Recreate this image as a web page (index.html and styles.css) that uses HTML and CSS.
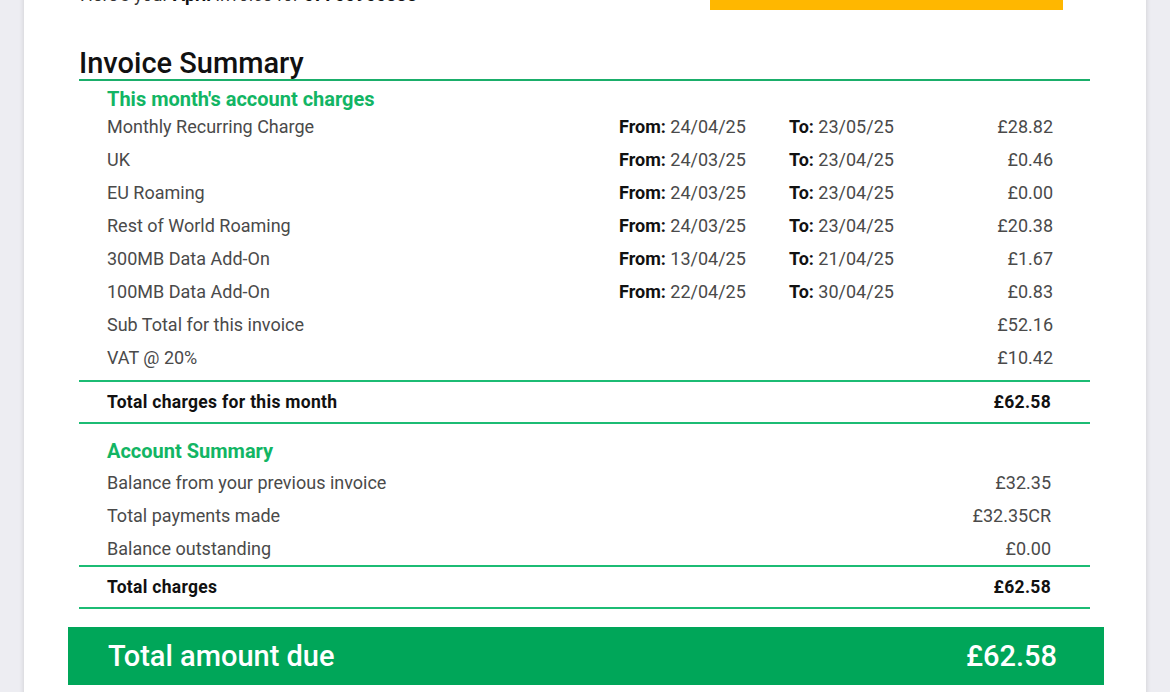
FILE: index.html
```html
<!DOCTYPE html>
<html lang="en">
<head>
<meta charset="utf-8">
<title>Invoice Summary</title>
<link rel="stylesheet" href="styles.css">
</head>
<body>
<div class="page">
  <div class="intro-row">
    <p class="intro">Here's your <b>April</b> invoice for <b>07700900333</b></p>
    <span class="pay-btn"></span>
  </div>

  <h2 class="summary-title">Invoice Summary</h2>

  <section class="block">
    <h3 class="block-title">This month's account charges</h3>
    <div class="rows">
      <div class="row"><span class="label">Monthly Recurring Charge</span><span class="from"><b>From:</b> 24/04/25</span><span class="to"><b>To:</b> 23/05/25</span><span class="amt">£28.82</span></div>
      <div class="row"><span class="label">UK</span><span class="from"><b>From:</b> 24/03/25</span><span class="to"><b>To:</b> 23/04/25</span><span class="amt">£0.46</span></div>
      <div class="row"><span class="label">EU Roaming</span><span class="from"><b>From:</b> 24/03/25</span><span class="to"><b>To:</b> 23/04/25</span><span class="amt">£0.00</span></div>
      <div class="row"><span class="label">Rest of World Roaming</span><span class="from"><b>From:</b> 24/03/25</span><span class="to"><b>To:</b> 23/04/25</span><span class="amt">£20.38</span></div>
      <div class="row"><span class="label">300MB Data Add-On</span><span class="from"><b>From:</b> 13/04/25</span><span class="to"><b>To:</b> 21/04/25</span><span class="amt">£1.67</span></div>
      <div class="row"><span class="label">100MB Data Add-On</span><span class="from"><b>From:</b> 22/04/25</span><span class="to"><b>To:</b> 30/04/25</span><span class="amt">£0.83</span></div>
      <div class="row"><span class="label">Sub Total for this invoice</span><span class="from"></span><span class="to"></span><span class="amt">£52.16</span></div>
      <div class="row"><span class="label">VAT @ 20%</span><span class="from"></span><span class="to"></span><span class="amt">£10.42</span></div>
    </div>
    <div class="total-row"><span class="label">Total charges for this month</span><span class="amt">£62.58</span></div>
  </section>

  <section class="block account">
    <h3 class="block-title">Account Summary</h3>
    <div class="rows">
      <div class="row"><span class="label">Balance from your previous invoice</span><span class="amt">£32.35</span></div>
      <div class="row"><span class="label">Total payments made</span><span class="amt">£32.35CR</span></div>
      <div class="row"><span class="label">Balance outstanding</span><span class="amt">£0.00</span></div>
    </div>
    <div class="total-row"><span class="label">Total charges</span><span class="amt">£62.58</span></div>
  </section>

  <div class="due-banner">
    <span class="due-label">Total amount due</span>
    <span class="due-amt">£62.58</span>
  </div>
</div>
</body>
</html>
```

FILE: styles.css
```css
* { box-sizing: border-box; }

html, body {
  margin: 0;
  padding: 0;
  height: 100%;
  overflow: hidden;
}

body {
  background: #ededf2;
  font-family: Roboto, "Liberation Sans", sans-serif;
  color: #444;
}

.page {
  background: #fff;
  margin: 0 24px 0 24px;
  padding: 0 56px 40px 55px;
  min-height: 100%;
  box-shadow: 0 0 5px rgba(0, 0, 0, 0.14);
}

.intro-row {
  display: flex;
  align-items: flex-end;
  height: 50px;
  margin-top: -40px;
}

.intro {
  margin: 0 0 5px 1px;
  font-size: 18px;
  line-height: 20px;
  color: #333;
  flex: 1;
}

.intro b { color: #111; }

.pay-btn {
  display: block;
  width: 353px;
  height: 50px;
  background: #ffb700;
  margin-right: 27px;
}

.summary-title {
  margin: 37px 0 0 0;
  font-size: 29px;
  line-height: 32px;
  font-weight: 500;
  color: #111;
  border-bottom: 2px solid #1aae6a;
}

.block-title {
  margin: 0;
  padding: 7px 0 0 28px;
  font-size: 20px;
  line-height: 22px;
  font-weight: 700;
  color: #12b564;
}

.rows { padding-bottom: 6px; }

.row {
  display: grid;
  grid-template-columns: 512px 170px 1fr auto;
  align-items: center;
  height: 33px;
  padding: 0 37px 0 28px;
  font-size: 18px;
  color: #4a4a4a;
}

.row b { color: #111; font-weight: 700; }

.amt { text-align: right; }

.total-row {
  display: flex;
  justify-content: space-between;
  align-items: center;
  height: 44px;
  padding: 0 39px 0 28px;
  border-top: 2px solid #1cbc74;
  border-bottom: 2px solid #1cbc74;
  font-size: 17.5px;
  font-weight: 700;
  letter-spacing: 0.3px;
  color: #111;
}

.account .block-title { padding-top: 16px; padding-bottom: 4px; }

.account .row {
  grid-template-columns: 1fr auto;
  padding-right: 39px;
}

.account .rows { padding-bottom: 0; }

.due-banner {
  display: flex;
  justify-content: space-between;
  align-items: center;
  height: 58px;
  margin: 18px -14px 0 -11px;
  padding: 0 47px 0 40px;
  background: #00a659;
  color: #fff;
}

.due-label {
  font-size: 29px;
  font-weight: 500;
}

.due-amt {
  font-size: 29px;
  font-weight: 500;
}
```
